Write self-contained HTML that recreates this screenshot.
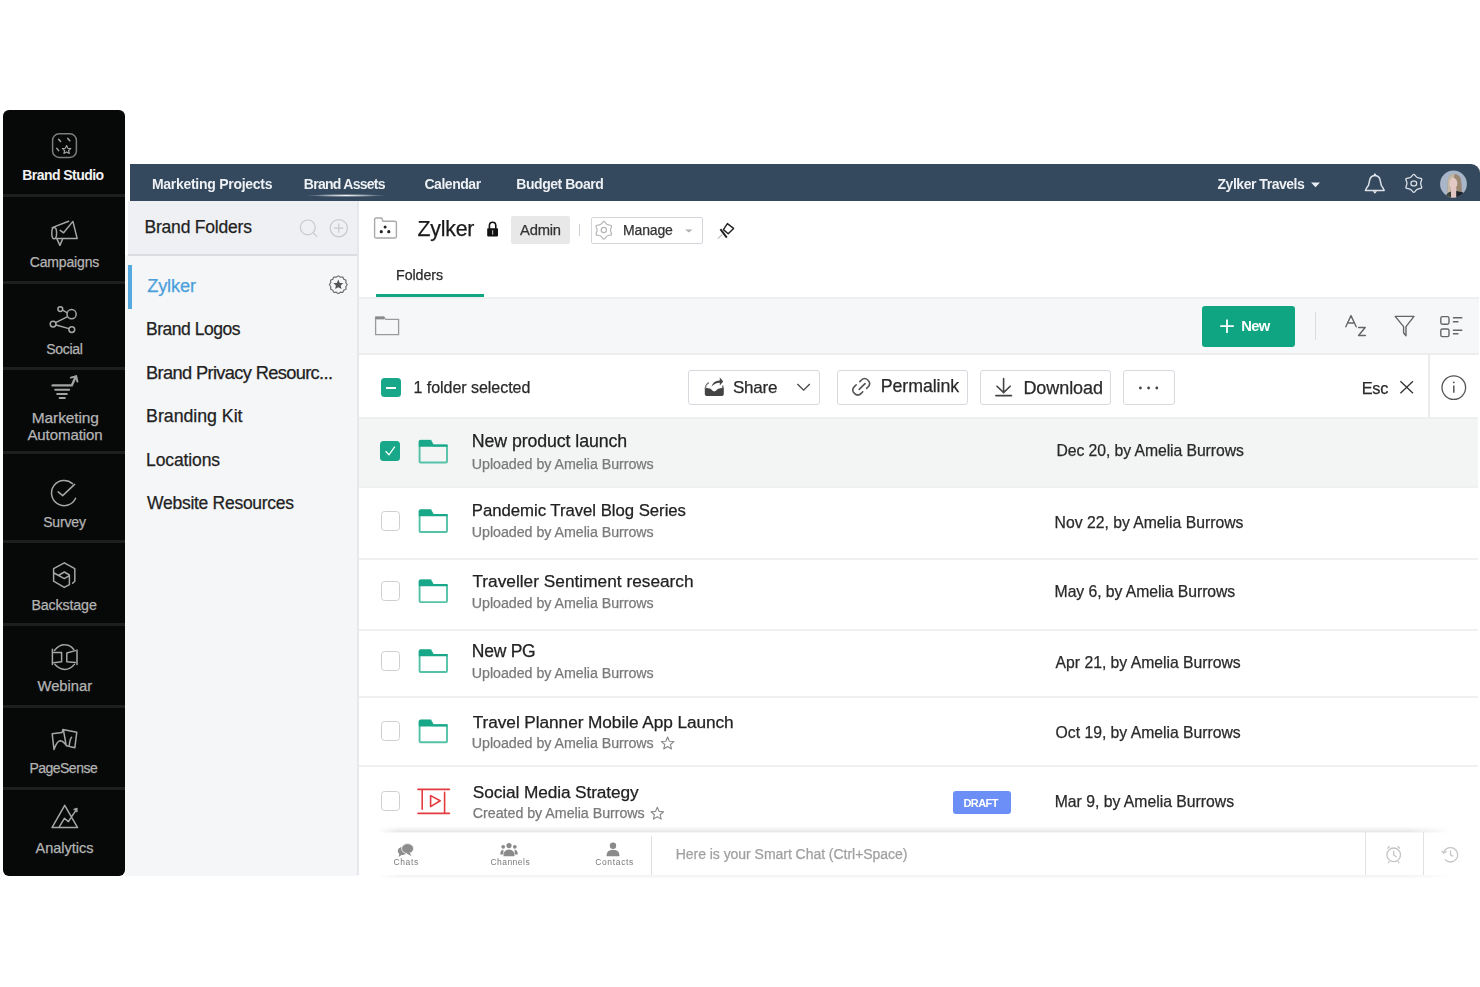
<!DOCTYPE html>
<html><head><meta charset="utf-8"><title>Brand Studio</title>
<style>
html,body{margin:0;padding:0;}
body{width:1480px;height:987px;position:relative;overflow:hidden;background:#ffffff;font-family:"Liberation Sans",sans-serif;}
.b{position:absolute;}
.t{position:absolute;white-space:nowrap;line-height:1;-webkit-font-smoothing:antialiased;}
svg.ic{position:absolute;left:0;top:0;width:1480px;height:987px;overflow:visible;}
#wrap{position:absolute;left:0;top:0;width:1480px;height:987px;overflow:hidden;filter:blur(0.35px);}
</style></head><body><div id="wrap">
<div class="b" style="left:3px;top:110px;width:122px;height:766px;background:#070909;border-radius:6px;"></div>
<div class="b" style="left:3px;top:193.5px;width:122px;height:3px;background:#1d1e1e;"></div>
<div class="b" style="left:3px;top:280.7px;width:122px;height:3px;background:#1d1e1e;"></div>
<div class="b" style="left:3px;top:367px;width:122px;height:3px;background:#1d1e1e;"></div>
<div class="b" style="left:3px;top:450.5px;width:122px;height:3px;background:#1d1e1e;"></div>
<div class="b" style="left:3px;top:540px;width:122px;height:3px;background:#1d1e1e;"></div>
<div class="b" style="left:3px;top:622.7px;width:122px;height:3px;background:#1d1e1e;"></div>
<div class="b" style="left:3px;top:704.6px;width:122px;height:3px;background:#1d1e1e;"></div>
<div class="b" style="left:3px;top:786.8px;width:122px;height:3px;background:#1d1e1e;"></div>
<div class="t" style="left:22.20px;top:167.55px;font-size:14.0px;font-weight:700;color:#f2f2f2;letter-spacing:-0.539px;">Brand Studio</div>
<div class="t" style="left:29.80px;top:255.35px;font-size:14.0px;font-weight:400;color:#b4b4b4;letter-spacing:-0.164px;-webkit-text-stroke:0.25px currentColor;">Campaigns</div>
<div class="t" style="left:46.20px;top:341.75px;font-size:14.0px;font-weight:400;color:#b4b4b4;letter-spacing:-0.304px;-webkit-text-stroke:0.25px currentColor;">Social</div>
<div class="t" style="left:31.80px;top:409.88px;font-size:15.5px;font-weight:400;color:#b4b4b4;letter-spacing:-0.117px;-webkit-text-stroke:0.25px currentColor;">Marketing</div>
<div class="t" style="left:27.40px;top:427.10px;font-size:15.0px;font-weight:400;color:#b4b4b4;letter-spacing:-0.071px;-webkit-text-stroke:0.25px currentColor;">Automation</div>
<div class="t" style="left:43.20px;top:515.45px;font-size:14.0px;font-weight:400;color:#b4b4b4;letter-spacing:-0.154px;-webkit-text-stroke:0.25px currentColor;">Survey</div>
<div class="t" style="left:31.40px;top:597.93px;font-size:14.25px;font-weight:400;color:#b4b4b4;letter-spacing:-0.139px;-webkit-text-stroke:0.25px currentColor;">Backstage</div>
<div class="t" style="left:37.50px;top:679.21px;font-size:14.75px;font-weight:400;color:#b4b4b4;letter-spacing:-0.008px;-webkit-text-stroke:0.25px currentColor;">Webinar</div>
<div class="t" style="left:29.40px;top:761.45px;font-size:14.0px;font-weight:400;color:#b4b4b4;letter-spacing:-0.513px;-webkit-text-stroke:0.25px currentColor;">PageSense</div>
<div class="t" style="left:35.50px;top:840.82px;font-size:14.5px;font-weight:400;color:#b4b4b4;letter-spacing:-0.009px;-webkit-text-stroke:0.25px currentColor;">Analytics</div>
<div class="b" style="left:130px;top:164px;width:1350px;height:37px;background:#34495e;border-top-right-radius:9px;"></div>
<div class="b" style="left:306px;top:193.5px;width:80px;height:3px;background:radial-gradient(ellipse at center, rgba(255,255,255,0.95) 0%, rgba(255,255,255,0.5) 35%, rgba(255,255,255,0) 70%);"></div>
<div class="t" style="left:151.90px;top:176.85px;font-size:14.0px;font-weight:700;color:#eef0f3;letter-spacing:-0.275px;">Marketing Projects</div>
<div class="t" style="left:303.80px;top:176.85px;font-size:14.0px;font-weight:700;color:#eef0f3;letter-spacing:-0.724px;">Brand Assets</div>
<div class="t" style="left:424.40px;top:176.85px;font-size:14.0px;font-weight:700;color:#eef0f3;letter-spacing:-0.452px;">Calendar</div>
<div class="t" style="left:516.30px;top:176.85px;font-size:14.0px;font-weight:700;color:#eef0f3;letter-spacing:-0.455px;">Budget Board</div>
<div class="t" style="left:1217.50px;top:177.15px;font-size:14.0px;font-weight:700;color:#eef0f3;letter-spacing:-0.470px;">Zylker Travels</div>
<div class="b" style="left:125px;top:255px;width:233px;height:621px;background:#f5f6f8;"></div>
<div class="b" style="left:128px;top:201px;width:230px;height:54px;background:#eff0f4;"></div>
<div class="b" style="left:128px;top:254px;width:230px;height:2px;background:#dadce1;"></div>
<div class="b" style="left:357px;top:201px;width:2px;height:674px;background:#e6e8ec;"></div>
<div class="b" style="left:128px;top:265px;width:3.5px;height:43.5px;background:#56a9de;"></div>
<div class="t" style="left:144.50px;top:219.08px;font-size:17.5px;font-weight:400;color:#1f1f1f;letter-spacing:-0.205px;-webkit-text-stroke:0.25px currentColor;">Brand Folders</div>
<div class="t" style="left:147.20px;top:277.45px;font-size:18.25px;font-weight:400;color:#4a9fdb;letter-spacing:-0.180px;-webkit-text-stroke:0.25px currentColor;">Zylker</div>
<div class="t" style="left:146.10px;top:321.48px;font-size:17.5px;font-weight:400;color:#222222;letter-spacing:-0.489px;-webkit-text-stroke:0.25px currentColor;">Brand Logos</div>
<div class="t" style="left:146.10px;top:364.35px;font-size:18.25px;font-weight:400;color:#222222;letter-spacing:-0.651px;-webkit-text-stroke:0.25px currentColor;">Brand Privacy Resourc...</div>
<div class="t" style="left:146.10px;top:408.27px;font-size:17.75px;font-weight:400;color:#222222;letter-spacing:-0.024px;-webkit-text-stroke:0.25px currentColor;">Branding Kit</div>
<div class="t" style="left:146.10px;top:451.58px;font-size:17.5px;font-weight:400;color:#222222;letter-spacing:-0.120px;-webkit-text-stroke:0.25px currentColor;">Locations</div>
<div class="t" style="left:147.10px;top:494.58px;font-size:17.5px;font-weight:400;color:#222222;letter-spacing:-0.279px;-webkit-text-stroke:0.25px currentColor;">Website Resources</div>
<div class="b" style="left:359px;top:297px;width:1120px;height:58px;background:#f6f7f9;"></div>
<div class="b" style="left:359px;top:297px;width:1120px;height:2px;background:#efefef;"></div>
<div class="b" style="left:359px;top:353px;width:1120px;height:2px;background:#ededee;"></div>
<div class="b" style="left:376px;top:294px;width:108px;height:3px;background:#10a583;"></div>
<div class="b" style="left:510.5px;top:216px;width:59.5px;height:28px;background:#e8e8e8;border-radius:2px;"></div>
<div class="b" style="left:579px;top:224px;width:1.2px;height:12px;background:#cfcfcf;"></div>
<div class="b" style="left:590.5px;top:216.5px;width:112px;height:27px;border:1px solid #d3d7dc;border-radius:2px;box-sizing:border-box;"></div>
<div class="t" style="left:417.50px;top:219.11px;font-size:21.25px;font-weight:400;color:#1a1a1a;letter-spacing:-0.194px;-webkit-text-stroke:0.25px currentColor;">Zylker</div>
<div class="t" style="left:520.00px;top:222.71px;font-size:14.75px;font-weight:400;color:#333333;letter-spacing:-0.201px;-webkit-text-stroke:0.25px currentColor;">Admin</div>
<div class="t" style="left:623.00px;top:223.35px;font-size:14.0px;font-weight:400;color:#333333;letter-spacing:-0.161px;-webkit-text-stroke:0.25px currentColor;">Manage</div>
<div class="t" style="left:396.00px;top:267.93px;font-size:14.25px;font-weight:400;color:#2a2a2a;letter-spacing:-0.065px;-webkit-text-stroke:0.25px currentColor;">Folders</div>
<div class="b" style="left:1201.8px;top:305.8px;width:93px;height:41.2px;background:#0fa583;border-radius:3px;"></div>
<div class="t" style="left:1241.30px;top:319.01px;font-size:14.75px;font-weight:700;color:#ffffff;letter-spacing:-0.728px;">New</div>
<div class="b" style="left:1315.3px;top:312px;width:1px;height:28px;background:#dcdde0;"></div>
<div class="b" style="left:359px;top:417.4px;width:1119px;height:2px;background:#efefef;"></div>
<div class="b" style="left:1428px;top:355px;width:1.5px;height:62.5px;background:#ececec;"></div>
<div class="b" style="left:381px;top:378.4px;width:19.5px;height:19px;background:#18a889;border-radius:3.5px;"></div>
<div class="b" style="left:385.5px;top:387.2px;width:10.5px;height:1.6px;background:#ffffff;"></div>
<div class="t" style="left:413.60px;top:380.35px;font-size:16.0px;font-weight:400;color:#2a2a2a;letter-spacing:-0.044px;-webkit-text-stroke:0.25px currentColor;">1 folder selected</div>
<div class="b" style="left:688.1px;top:369.5px;width:131.79999999999995px;height:35.5px;border:1px solid #d6d9dd;border-radius:3px;box-sizing:border-box;"></div>
<div class="b" style="left:836.5px;top:369.5px;width:131.79999999999995px;height:35.5px;border:1px solid #d6d9dd;border-radius:3px;box-sizing:border-box;"></div>
<div class="b" style="left:979.6px;top:369.5px;width:131.80000000000007px;height:35.5px;border:1px solid #d6d9dd;border-radius:3px;box-sizing:border-box;"></div>
<div class="b" style="left:1123px;top:369.5px;width:51.799999999999955px;height:35.5px;border:1px solid #d6d9dd;border-radius:3px;box-sizing:border-box;"></div>
<div class="t" style="left:733.00px;top:379.01px;font-size:17.0px;font-weight:400;color:#2a2a2a;letter-spacing:-0.227px;-webkit-text-stroke:0.25px currentColor;">Share</div>
<div class="t" style="left:880.70px;top:378.37px;font-size:17.75px;font-weight:400;color:#2a2a2a;letter-spacing:-0.055px;-webkit-text-stroke:0.25px currentColor;">Permalink</div>
<div class="t" style="left:1023.40px;top:378.76px;font-size:18.0px;font-weight:400;color:#2a2a2a;letter-spacing:-0.063px;-webkit-text-stroke:0.25px currentColor;">Download</div>
<div class="t" style="left:1361.70px;top:380.14px;font-size:16.25px;font-weight:400;color:#2a2a2a;letter-spacing:-0.232px;-webkit-text-stroke:0.25px currentColor;">Esc</div>
<div class="b" style="left:359px;top:419.2px;width:1119px;height:66.8px;background:#f3f5f5;"></div>
<div class="b" style="left:359px;top:485.7px;width:1119px;height:2px;background:#f0f0f0;"></div>
<div class="b" style="left:359px;top:558px;width:1119px;height:2px;background:#f0f0f0;"></div>
<div class="b" style="left:359px;top:628.6px;width:1119px;height:2px;background:#f0f0f0;"></div>
<div class="b" style="left:359px;top:695.5px;width:1119px;height:2px;background:#f0f0f0;"></div>
<div class="b" style="left:359px;top:764.5px;width:1119px;height:2px;background:#f0f0f0;"></div>
<div class="b" style="left:380px;top:441.2px;width:20px;height:20px;background:#18a889;border-radius:3.5px;"></div>
<div class="b" style="left:380.5px;top:510.8px;width:19.5px;height:20px;border:1.6px solid #cfcfcf;border-radius:3.5px;box-sizing:border-box;background:#fff;"></div>
<div class="b" style="left:380.5px;top:581.2px;width:19.5px;height:20px;border:1.6px solid #cfcfcf;border-radius:3.5px;box-sizing:border-box;background:#fff;"></div>
<div class="b" style="left:380.5px;top:651px;width:19.5px;height:20px;border:1.6px solid #cfcfcf;border-radius:3.5px;box-sizing:border-box;background:#fff;"></div>
<div class="b" style="left:380.5px;top:721.4px;width:19.5px;height:20px;border:1.6px solid #cfcfcf;border-radius:3.5px;box-sizing:border-box;background:#fff;"></div>
<div class="b" style="left:380.5px;top:791.3px;width:19.5px;height:20px;border:1.6px solid #cfcfcf;border-radius:3.5px;box-sizing:border-box;background:#fff;"></div>
<div class="t" style="left:471.80px;top:433.47px;font-size:17.75px;font-weight:400;color:#222222;letter-spacing:-0.089px;-webkit-text-stroke:0.25px currentColor;">New product launch</div>
<div class="t" style="left:471.80px;top:456.73px;font-size:14.25px;font-weight:400;color:#7a7a7a;letter-spacing:-0.041px;-webkit-text-stroke:0.25px currentColor;">Uploaded by Amelia Burrows</div>
<div class="t" style="left:471.80px;top:502.62px;font-size:16.75px;font-weight:400;color:#222222;letter-spacing:-0.034px;-webkit-text-stroke:0.25px currentColor;">Pandemic Travel Blog Series</div>
<div class="t" style="left:471.80px;top:525.23px;font-size:14.25px;font-weight:400;color:#7a7a7a;letter-spacing:-0.041px;-webkit-text-stroke:0.25px currentColor;">Uploaded by Amelia Burrows</div>
<div class="t" style="left:472.40px;top:572.99px;font-size:17.25px;font-weight:400;color:#222222;letter-spacing:0.014px;-webkit-text-stroke:0.25px currentColor;">Traveller Sentiment research</div>
<div class="t" style="left:471.80px;top:595.73px;font-size:14.25px;font-weight:400;color:#7a7a7a;letter-spacing:-0.041px;-webkit-text-stroke:0.25px currentColor;">Uploaded by Amelia Burrows</div>
<div class="t" style="left:471.80px;top:642.98px;font-size:17.5px;font-weight:400;color:#222222;letter-spacing:-0.249px;-webkit-text-stroke:0.25px currentColor;">New PG</div>
<div class="t" style="left:471.80px;top:666.23px;font-size:14.25px;font-weight:400;color:#7a7a7a;letter-spacing:-0.041px;-webkit-text-stroke:0.25px currentColor;">Uploaded by Amelia Burrows</div>
<div class="t" style="left:472.80px;top:713.69px;font-size:17.25px;font-weight:400;color:#222222;letter-spacing:-0.072px;-webkit-text-stroke:0.25px currentColor;">Travel Planner Mobile App Launch</div>
<div class="t" style="left:471.80px;top:735.53px;font-size:14.25px;font-weight:400;color:#7a7a7a;letter-spacing:-0.041px;-webkit-text-stroke:0.25px currentColor;">Uploaded by Amelia Burrows</div>
<div class="t" style="left:472.80px;top:783.89px;font-size:17.25px;font-weight:400;color:#222222;letter-spacing:-0.098px;-webkit-text-stroke:0.25px currentColor;">Social Media Strategy</div>
<div class="t" style="left:472.80px;top:805.93px;font-size:14.25px;font-weight:400;color:#7a7a7a;letter-spacing:-0.030px;-webkit-text-stroke:0.25px currentColor;">Created by Amelia Burrows</div>
<div class="t" style="left:1056.50px;top:443.26px;font-size:15.75px;font-weight:400;color:#2a2a2a;letter-spacing:-0.074px;-webkit-text-stroke:0.25px currentColor;">Dec 20, by Amelia Burrows</div>
<div class="t" style="left:1054.60px;top:515.36px;font-size:15.75px;font-weight:400;color:#2a2a2a;letter-spacing:-0.011px;-webkit-text-stroke:0.25px currentColor;">Nov 22, by Amelia Burrows</div>
<div class="t" style="left:1054.60px;top:584.26px;font-size:15.75px;font-weight:400;color:#2a2a2a;letter-spacing:-0.063px;-webkit-text-stroke:0.25px currentColor;">May 6, by Amelia Burrows</div>
<div class="t" style="left:1055.60px;top:654.86px;font-size:15.75px;font-weight:400;color:#2a2a2a;letter-spacing:-0.020px;-webkit-text-stroke:0.25px currentColor;">Apr 21, by Amelia Burrows</div>
<div class="t" style="left:1055.60px;top:725.26px;font-size:15.75px;font-weight:400;color:#2a2a2a;letter-spacing:-0.019px;-webkit-text-stroke:0.25px currentColor;">Oct 19, by Amelia Burrows</div>
<div class="t" style="left:1054.70px;top:794.06px;font-size:15.75px;font-weight:400;color:#2a2a2a;letter-spacing:-0.001px;-webkit-text-stroke:0.25px currentColor;">Mar 9, by Amelia Burrows</div>
<div class="b" style="left:953px;top:790.5px;width:58.4px;height:23.8px;background:#6b8ff6;border-radius:3px;"></div>
<div class="t" style="left:963.40px;top:798.09px;font-size:11.0px;font-weight:700;color:#ffffff;letter-spacing:-0.538px;">DRAFT</div>
<div class="b" style="left:377px;top:826px;width:1100px;height:7px;background:linear-gradient(to bottom, rgba(0,0,0,0) 0%, rgba(0,0,0,0.05) 45%, rgba(0,0,0,0.09) 80%, rgba(0,0,0,0.02) 100%);-webkit-mask-image:linear-gradient(to right, transparent 0px, #000 22px, #000 1030px, transparent 1075px);"></div>
<div class="b" style="left:377px;top:875px;width:1100px;height:4px;background:linear-gradient(to bottom, rgba(0,0,0,0.05) 0%, rgba(0,0,0,0.03) 50%, rgba(0,0,0,0) 100%);-webkit-mask-image:linear-gradient(to right, transparent 0px, #000 22px, #000 1030px, transparent 1075px);"></div>
<div class="b" style="left:651px;top:835.5px;width:1px;height:39px;background:#dedede;"></div>
<div class="b" style="left:1365px;top:832px;width:1px;height:43px;background:#e2e2e2;"></div>
<div class="b" style="left:1422.5px;top:832px;width:1px;height:43px;background:#e2e2e2;"></div>
<div class="t" style="left:393.40px;top:858.20px;font-size:8.5px;font-weight:400;color:#7a7a7a;letter-spacing:0.661px;">Chats</div>
<div class="t" style="left:490.40px;top:858.20px;font-size:8.5px;font-weight:400;color:#7a7a7a;letter-spacing:0.477px;">Channels</div>
<div class="t" style="left:595.20px;top:858.20px;font-size:8.5px;font-weight:400;color:#7a7a7a;letter-spacing:0.658px;">Contacts</div>
<div class="t" style="left:675.70px;top:847.45px;font-size:14.0px;font-weight:400;color:#a0a0a0;letter-spacing:-0.036px;-webkit-text-stroke:0.25px currentColor;">Here is your Smart Chat (Ctrl+Space)</div>
<svg class="ic" viewBox="0 0 1480 987">
<g fill="none" stroke="#a6a6a6" stroke-width="1.5" stroke-linecap="round" stroke-linejoin="round">
 <!-- Brand Studio -->
 <rect x="52.6" y="133.8" width="23.8" height="23.6" rx="6.5" stroke="#7c7c7c"/>
 <path d="M58.6,139.2 L60.6,141.4 M67.8,138.4 L69.8,140.8 M56.8,148.4 L58.6,150.6"/>
 <path d="M66.6,145.6 L67.9,148.3 L70.8,148.6 L68.6,150.5 L69.3,153.4 L66.6,151.9 L63.9,153.4 L64.6,150.5 L62.4,148.6 L65.3,148.3 Z" stroke-width="1.1"/>
 <!-- Campaigns megaphone -->
 <path d="M52.2,227.6 L68.6,221.2"/>
 <path d="M57,238.6 L77.2,238.6 L72.9,221.4 L63.6,232.8 L60.2,230.4"/>
 <ellipse cx="54.2" cy="233.2" rx="2.4" ry="5.6"/>
 <path d="M56.8,238.6 L59.9,245.4 L62.6,239"/>
 <!-- Social -->
 <circle cx="60.3" cy="309.1" r="2.4"/>
 <circle cx="71.6" cy="314.2" r="4.6"/>
 <circle cx="53.1" cy="324.1" r="2.9"/>
 <circle cx="71.8" cy="329.6" r="2.9"/>
 <path d="M62.6,310.2 L67,312.6 M67.6,316.6 L55.6,322.6 M56,325 L69,328.6"/>
 <!-- Survey -->
 <path d="M72.5,483.6 A12.6,12.6 0 1 0 75.6,498.2"/>
 <path d="M58.2,491.9 L62.7,495.6 L74.6,484.4"/>
 <!-- Backstage -->
 <path d="M64.3,562.8 L74.8,568.6 L74.8,581.2 L72.6,583.2 M64.3,562.8 L53.6,568.6 L53.6,581.2 L64.3,587.4 L69.4,584.6 L69.4,575 L64.3,572 L59.2,575 M54,573 L64.3,578.6 L69.4,575.6"/>
 <!-- Webinar -->
 <path d="M52.4,649.2 L52.4,664.4 M77,650 L77,664.6"/>
 <path d="M53.6,652.4 L61.6,652.4 L61.6,661.8 L53.6,662.8 M75.4,650.6 L66.8,653 L66.8,661.8 L75.4,662.4"/>
 <path d="M54.4,650.4 Q59.5,644.6 64.6,644.8 Q70,644.8 73.8,649.4 M55,664.6 Q59.5,669.4 64.6,669.4 Q70.4,669.4 74.4,664.4" stroke-width="1.5"/>
 <!-- PageSense -->
 <path d="M52.2,733.8 L62,732.6 L62.8,729.6 L76.8,732.2 L74.8,747.8 L66.6,745.8 M52.2,733.8 L54,749.6 Q57,741 60,740.8 Q63,740.8 66.6,745.8 M63.6,731 L66.2,745.6 M69.2,745.6 Q70,738.8 71.6,737.2"/>
 <!-- Analytics -->
 <path d="M64.7,805.4 L52,827.6 L58.6,827.6 M64.7,805.4 L77.6,827.6 L58.8,827.6 L64.4,818.4 L68.4,821.6 L76.2,809.8"/>
 <path d="M74.2,809.4 L76.8,808.6 L76.8,811.6" stroke-width="1.6"/>
</g>
<!-- Marketing automation (filled bars) -->
<g stroke="#a3a3a3" stroke-linecap="round" fill="none">
 <path d="M52.6,385.4 L71.8,385.4 L75.6,377" stroke-width="2.4"/>
 <path d="M70.8,377.6 L76.2,376.2 L77.4,381.6" stroke-width="2"/>
 <path d="M55.2,389.8 L69.2,389.8" stroke-width="2"/>
 <path d="M57.2,393.9 L66.8,393.9" stroke-width="2"/>
 <path d="M59.6,398 L64.8,398" stroke-width="2"/>
</g>
<!-- nav icons -->
<g fill="none" stroke="#dde2e8" stroke-width="1.3" stroke-linejoin="round" stroke-linecap="round">
 <path d="M1365.4,190.4 L1384.2,190.4 Q1383.2,187.8 1381.4,185.6 L1379.8,178.8 Q1378.4,175.6 1374.9,175.6 Q1371.4,175.6 1370,178.8 L1368.4,185.6 Q1366.4,187.8 1365.4,190.4 Z" stroke-width="1.5"/>
 <circle cx="1374.9" cy="174.6" r="1.1" fill="#e9edf2" stroke="none"/>
 <path d="M1372.8,191.2 L1377,191.2 L1374.9,193.8 Z" fill="#e9edf2" stroke="none"/>
 <path d="M1412.88,174.89 Q1413.80,173.80 1414.72,174.89 L1416.18,176.60 Q1417.10,177.68 1418.50,177.94 L1420.71,178.34 Q1422.11,178.60 1421.63,179.94 L1420.88,182.06 Q1420.40,183.40 1420.88,184.74 L1421.63,186.86 Q1422.11,188.20 1420.71,188.46 L1418.50,188.86 Q1417.10,189.12 1416.18,190.20 L1414.72,191.91 Q1413.80,193.00 1412.88,191.91 L1411.42,190.20 Q1410.50,189.12 1409.10,188.86 L1406.89,188.46 Q1405.49,188.20 1405.97,186.86 L1406.72,184.74 Q1407.20,183.40 1406.72,182.06 L1405.97,179.94 Q1405.49,178.60 1406.89,178.34 L1409.10,177.94 Q1410.50,177.68 1411.42,176.60 L1412.88,174.89 Z"/>
 <rect x="1411" y="181.2" width="5.6" height="4.6" rx="2"/>
</g>
<path d="M1311,182.4 L1320,182.4 L1315.5,187.2 Z" fill="#e9edf2"/>
<!-- avatar -->
<defs><clipPath id="av"><circle cx="1453.5" cy="184" r="13.4"/></clipPath></defs>
<g clip-path="url(#av)">
 <rect x="1440" y="170" width="28" height="28" fill="#a9b5c9"/>
 <path d="M1447.4,198 L1447.8,181 Q1448.6,174.2 1454.4,174 Q1460.6,174.4 1461.2,181 L1462.4,198 Z" fill="#9a8872"/>
 <path d="M1447.4,198 L1447.8,181 Q1448.6,174.2 1454.4,174 L1452,198 Z" fill="#c5b9a6"/>
 <ellipse cx="1453.4" cy="183.4" rx="3.9" ry="5.6" fill="#e4c8c4"/>
 <rect x="1451" y="188" width="5.4" height="10" fill="#e2c6c6"/>
 <path d="M1456.2,191 L1462.6,192.2 Q1466,194 1467,198 L1456.4,198 Z" fill="#1d2430"/>
 <path d="M1445,198 Q1446.2,192.6 1451,191.4 L1451,198 Z" fill="#3b4038"/>
</g>
<!-- folder panel header icons -->
<g fill="none" stroke="#c7c9cd" stroke-width="1.2">
 <circle cx="307.8" cy="227.4" r="7.4"/>
 <path d="M313.2,232.8 L317,236.6"/>
 <circle cx="338.8" cy="228.2" r="8.6"/>
 <path d="M338.8,223.6 L338.8,232.8 M334.2,228.2 L343.4,228.2"/>
</g>
<g>
 <path d="M347.15,284.70 L346.53,285.78 L345.79,286.71 L345.97,287.88 L345.96,289.12 L344.88,289.75 L343.78,290.18 L343.35,291.28 L342.73,292.36 L341.48,292.37 L340.31,292.19 L339.38,292.93 L338.30,293.55 L337.22,292.93 L336.29,292.19 L335.12,292.37 L333.88,292.36 L333.25,291.28 L332.82,290.18 L331.72,289.75 L330.64,289.12 L330.63,287.88 L330.81,286.71 L330.07,285.78 L329.45,284.70 L330.07,283.62 L330.81,282.69 L330.63,281.52 L330.64,280.27 L331.72,279.65 L332.82,279.22 L333.25,278.12 L333.88,277.04 L335.12,277.03 L336.29,277.21 L337.22,276.47 L338.30,275.85 L339.38,276.47 L340.31,277.21 L341.48,277.03 L342.73,277.04 L343.35,278.12 L343.78,279.22 L344.88,279.65 L345.96,280.27 L345.97,281.52 L345.79,282.69 L346.53,283.62 L347.15,284.70 Z" fill="none" stroke="#707070" stroke-width="1.2"/>
 <path d="M338.3,279.6 L339.8,282.9 L343.3,283.1 L340.7,285.5 L341.5,289 L338.3,287.2 L335.1,289 L335.9,285.5 L333.3,283.1 L336.8,282.9 Z" fill="#555"/>
</g>
<!-- header folder icon -->
<path d="M374.6,236.4 L374.6,219.8 Q374.6,218 376.4,218 L381.6,218 L383,221.2 L394.6,221.2 Q396.4,221.2 396.4,223 L396.4,236.4 Q396.4,238 394.6,238 L376.4,238 Q374.6,238 374.6,236.4 Z" fill="none" stroke="#a9a9a9" stroke-width="1.4"/>
<circle cx="385.1" cy="226.9" r="1.5" fill="#222"/>
<circle cx="381.3" cy="231.7" r="1.6" fill="#222"/>
<circle cx="388.8" cy="231.7" r="1.6" fill="#222"/>
<!-- lock -->
<path d="M489.4,228.8 L489.4,225.8 Q489.4,222.2 492.6,222.2 Q495.8,222.2 495.8,225.8 L495.8,228.8" fill="none" stroke="#111" stroke-width="1.6"/>
<rect x="487.2" y="228.2" width="10.8" height="8.2" rx="0.8" fill="#111"/>
<rect x="492" y="230.2" width="1.2" height="4.4" fill="#aaa"/>
<!-- manage gear -->
<path d="M602.90,221.88 Q603.80,220.80 604.70,221.88 L606.10,223.58 Q607.00,224.66 608.38,224.89 L610.56,225.26 Q611.94,225.50 611.45,226.82 L610.69,228.88 Q610.20,230.20 610.69,231.52 L611.45,233.58 Q611.94,234.90 610.56,235.14 L608.38,235.51 Q607.00,235.74 606.10,236.82 L604.70,238.52 Q603.80,239.60 602.90,238.52 L601.50,236.82 Q600.60,235.74 599.22,235.51 L597.04,235.14 Q595.66,234.90 596.15,233.58 L596.91,231.52 Q597.40,230.20 596.91,228.88 L596.15,226.82 Q595.66,225.50 597.04,225.26 L599.22,224.89 Q600.60,224.66 601.50,223.58 L602.90,221.88 Z" fill="none" stroke="#b5b5b5" stroke-width="1.2"/>
<circle cx="603.8" cy="230" r="2.6" fill="none" stroke="#b5b5b5" stroke-width="1.2"/>
<path d="M685,229.4 L692.6,229.4 L688.8,232.6 Z" fill="#b0b0b0"/>
<!-- pin -->
<g fill="none" stroke="#222" stroke-width="1.5" stroke-linejoin="round">
 <path d="M727.4,223.6 L733.6,228.4 L728.2,233.8 L723.4,229.6 Z" stroke-width="1.4"/>
 <path d="M720.4,229.2 L726.8,237.6" stroke-width="1.9"/>
 <path d="M722.4,234.4 L717.8,238.6" stroke="#999" stroke-width="1"/>
</g>
<!-- toolbar folder icon -->
<path d="M375.6,334.6 L375.6,317.2 L384,317.2 L385.6,319.4 L398.6,319.4 L398.6,334.6 Z" fill="none" stroke="#9a9a9a" stroke-width="1.3"/>
<rect x="375.6" y="316.6" width="8.6" height="2.8" fill="#8a8a8a"/>
<!-- new + -->
<path d="M1227,319.4 L1227,333 M1220.2,326.2 L1233.8,326.2" stroke="#fff" stroke-width="1.8"/>
<!-- AZ, funnel, list -->
<g fill="none" stroke="#666" stroke-width="1.4" stroke-linejoin="round" stroke-linecap="round">
 <path d="M1345.8,326.8 L1351,315.6 L1356.2,326.8 M1347.6,323 L1354.4,323"/>
 <path d="M1358.6,327.6 L1365.2,327.6 L1358.6,335.4 L1365.4,335.4" stroke-width="1.5"/>
 <path d="M1395.2,316.4 L1414,316.4 L1406,326.6 L1406,335.8 L1403.6,332.8 L1403.6,326.6 Z"/>
 <rect x="1440.8" y="316.6" width="8.2" height="7.6" rx="1.6"/>
 <rect x="1440.8" y="329" width="8.2" height="7.6" rx="1.6"/>
 <path d="M1453.4,317.8 L1461.8,317.8 M1453.4,321.8 L1458,321.8 M1453.4,330.2 L1461.8,330.2 M1453.4,333.8 L1458,333.8"/>
</g>
<!-- share -->
<g fill="#444">
 <path d="M704.8,387.6 L710.6,388.8 Q713,391.4 714.2,391.4 Q715.6,391.4 718,388.8 L723.8,387.6 L723.8,393.4 Q723.8,396 721.2,396 L707.4,396 Q704.8,396 704.8,393.4 Z"/>
 <path d="M705.4,389 Q705.2,384.6 709,382.6" fill="none" stroke="#777" stroke-width="1.2"/>
 <path d="M722.8,385.6 L722.8,389" fill="none" stroke="#555" stroke-width="1.2"/>
 <path d="M711.4,386.6 Q713.6,380.4 719.8,380.6 L719.8,377.6 L723.2,381.4 L719.8,385.4 L719.8,382.8 Q715.4,382.6 711.4,386.6 Z"/>
</g>
<path d="M797.4,384 L803.6,390.2 L809.8,384" fill="none" stroke="#444" stroke-width="1.3"/>
<!-- link -->
<g fill="none" stroke="#555" stroke-width="1.6" stroke-linecap="round">
 <path d="M859.8,381.6 L861.2,380.2 Q864.6,376.8 868,380.2 Q871.4,383.6 868,387 L866.6,388.4"/>
 <path d="M856.2,384.8 L854.4,386.6 Q851,390 854.4,393.4 Q857.8,396.8 861.2,393.4 L862.8,391.8"/>
 <path d="M859.2,389.4 L865,383.6"/>
</g>
<!-- download -->
<g fill="none" stroke="#444" stroke-width="1.6" stroke-linecap="round">
 <path d="M1003.6,378.6 L1003.6,392.4 M997,386.2 L1003.6,392.6 L1010.2,386.2"/>
 <path d="M996,395.6 L1011.4,395.6" stroke-width="1.8"/>
</g>
<g fill="#444"><circle cx="1140.4" cy="388" r="1.4"/><circle cx="1148.6" cy="388" r="1.4"/><circle cx="1156.8" cy="388" r="1.4"/></g>
<!-- esc x, info -->
<path d="M1400.4,381.2 L1413,393.2 M1413,381.2 L1400.4,393.2" stroke="#333" stroke-width="1.3"/>
<circle cx="1453.8" cy="387.6" r="11.8" fill="none" stroke="#555" stroke-width="1.3"/>
<circle cx="1453.8" cy="382.4" r="0.9" fill="#555"/>
<path d="M1453.8,385.4 L1453.8,392.8" stroke="#555" stroke-width="1.5"/>
<!-- checkmark row1 -->
<path d="M385.6,451.2 L389,454.8 L394.8,446.6" fill="none" stroke="#fff" stroke-width="1.3"/>
<!-- folders -->
<g id="fd">
</g>
<path d="M419.6,444.70000000000005 L419.6,461.70000000000005 Q419.6,462.5 420.6,462.5 L446,462.5 Q447,462.5 447,461.5 L447,446.5 Q447,445.5 446,445.5 L433,445.5 L430.6,440.70000000000005 L420.6,440.70000000000005 Q419.6,440.70000000000005 419.6,441.70000000000005 Z" fill="none" stroke="#55c2a7" stroke-width="1.9"/>
<path d="M418.8,441.70000000000005 Q418.8,440.1 420.4,440.1 L430.6,440.1 L433.4,444.5 L447.6,444.5 L447.6,446.70000000000005 L418.8,446.70000000000005 Z" fill="#18a889"/>
<path d="M419.6,514.2 L419.6,531.2 Q419.6,532.0 420.6,532.0 L446,532.0 Q447,532.0 447,531.0 L447,516.0 Q447,515.0 446,515.0 L433,515.0 L430.6,510.20000000000005 L420.6,510.20000000000005 Q419.6,510.20000000000005 419.6,511.20000000000005 Z" fill="none" stroke="#55c2a7" stroke-width="1.9"/>
<path d="M418.8,511.20000000000005 Q418.8,509.6 420.4,509.6 L430.6,509.6 L433.4,514.0 L447.6,514.0 L447.6,516.2 L418.8,516.2 Z" fill="#18a889"/>
<path d="M419.6,584.3000000000001 L419.6,601.3000000000001 Q419.6,602.1 420.6,602.1 L446,602.1 Q447,602.1 447,601.1 L447,586.1 Q447,585.1 446,585.1 L433,585.1 L430.6,580.3000000000001 L420.6,580.3000000000001 Q419.6,580.3000000000001 419.6,581.3000000000001 Z" fill="none" stroke="#55c2a7" stroke-width="1.9"/>
<path d="M418.8,581.3000000000001 Q418.8,579.7 420.4,579.7 L430.6,579.7 L433.4,584.1 L447.6,584.1 L447.6,586.3000000000001 L418.8,586.3000000000001 Z" fill="#18a889"/>
<path d="M419.6,654.2 L419.6,671.2 Q419.6,672.0 420.6,672.0 L446,672.0 Q447,672.0 447,671.0 L447,656.0 Q447,655.0 446,655.0 L433,655.0 L430.6,650.2 L420.6,650.2 Q419.6,650.2 419.6,651.2 Z" fill="none" stroke="#55c2a7" stroke-width="1.9"/>
<path d="M418.8,651.2 Q418.8,649.6 420.4,649.6 L430.6,649.6 L433.4,654.0 L447.6,654.0 L447.6,656.2 L418.8,656.2 Z" fill="#18a889"/>
<path d="M419.6,724.4 L419.6,741.4 Q419.6,742.1999999999999 420.6,742.1999999999999 L446,742.1999999999999 Q447,742.1999999999999 447,741.1999999999999 L447,726.1999999999999 Q447,725.1999999999999 446,725.1999999999999 L433,725.1999999999999 L430.6,720.4 L420.6,720.4 Q419.6,720.4 419.6,721.4 Z" fill="none" stroke="#55c2a7" stroke-width="1.9"/>
<path d="M418.8,721.4 Q418.8,719.8 420.4,719.8 L430.6,719.8 L433.4,724.1999999999999 L447.6,724.1999999999999 L447.6,726.4 L418.8,726.4 Z" fill="#18a889"/>
<g stroke="#e33b3f" stroke-width="1.6" fill="none" stroke-linecap="round"><path d="M418,789.4 L449.4,789.4 M418,813.4 L449.4,813.4 M422.2,789.4 L422.2,809.2 M444.6,792.4 L444.6,813.4"/><path d="M430.6,795.6 L440.2,800.8 L430.6,806.6 Z" stroke-linejoin="round"/></g>
<path d="M667.60,737.00 L669.35,741.20 L673.88,741.56 L670.42,744.52 L671.48,748.94 L667.60,746.57 L663.72,748.94 L664.78,744.52 L661.32,741.56 L665.85,741.20 Z" fill="none" stroke="#888" stroke-width="1.1" stroke-linejoin="round"/>
<path d="M657.30,807.20 L659.05,811.40 L663.58,811.76 L660.12,814.72 L661.18,819.14 L657.30,816.77 L653.42,819.14 L654.48,814.72 L651.02,811.76 L655.55,811.40 Z" fill="none" stroke="#888" stroke-width="1.1" stroke-linejoin="round"/>
<g fill="#8d8d8d"><ellipse cx="402.4" cy="851" rx="4.6" ry="4"/><path d="M399.4,853.4 L398.6,857 L402.4,854.6 Z"/><ellipse cx="407.6" cy="848.6" rx="6" ry="5" stroke="#fff" stroke-width="0.8"/><path d="M409.6,852.6 L411.4,856 L406.4,853.4 Z"/></g>
<g fill="#8a8a8a"><circle cx="509" cy="845.6" r="2.6"/><circle cx="503.2" cy="846.8" r="1.9"/><circle cx="514.8" cy="846.8" r="1.9"/><path d="M503.4,856.2 Q503.4,849.6 509,849.6 Q514.6,849.6 514.6,856.2 Z"/><path d="M500.2,854.6 Q500.2,849.8 503.4,849.8 L503.4,854.6 Z M517.8,854.6 Q517.8,849.8 514.6,849.8 L514.6,854.6 Z"/></g>
<g fill="#8a8a8a"><circle cx="613" cy="845.8" r="3.2"/><path d="M606.4,856.2 Q606.4,849.8 613,849.8 Q619.6,849.8 619.6,856.2 Z"/></g>
<g fill="none" stroke="#c4c4c4" stroke-width="1.3"><circle cx="1393.7" cy="854.8" r="6.8"/><path d="M1393.7,850.8 L1393.7,855 L1396.6,857 M1387.4,848.4 L1389.8,846.2 M1400,848.4 L1397.6,846.2 M1389.4,861.4 L1388.2,863 M1398,861.4 L1399.2,863"/></g>
<g fill="none" stroke="#c4c4c4" stroke-width="1.3"><path d="M1443.8,852.2 A7.2,7.2 0 1 1 1445,859.4"/><path d="M1441.6,850.6 L1443.8,853.2 L1446.6,851.2 M1450.5,850.4 L1450.5,854.8 L1453.2,856.4"/></g>

</svg>
</div></body></html>
